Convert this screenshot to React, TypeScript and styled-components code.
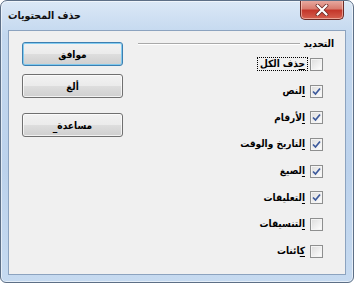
import React from 'react';
import styled, { createGlobalStyle } from 'styled-components';

const GlobalStyle = createGlobalStyle`
  html, body {
    margin: 0;
    padding: 0;
    background: #ffffff;
  }
  body {
    font-family: 'DejaVu Sans Condensed', 'DejaVu Sans', sans-serif;
  }
`;

const Frame = styled.div`
  box-sizing: border-box;
  width: 354px;
  height: 283px;
  display: flex;
  flex-direction: column;
  border: 1px solid #5d6f86;
  border-radius: 7px 7px 6px 6px;
  background: linear-gradient(180deg, #dbe8f6 0%, #c3d8ef 12%, #bcd2ec 60%, #c6daf0 100%);
  box-shadow: inset 0 0 0 1px rgba(255, 255, 255, 0.55);
  overflow: hidden;
`;

const TitleBar = styled.div`
  height: 29px;
  display: flex;
  align-items: flex-start;
  justify-content: space-between;
  padding: 0 9px 0 7px;
`;

const Title = styled.div`
  margin-top: 8px;
  font-size: 10.5px;
  font-weight: bold;
  color: #111;
  direction: rtl;
`;

const CloseButton = styled.div`
  width: 42px;
  height: 19px;
  margin-top: -1px;
  display: flex;
  align-items: center;
  justify-content: center;
  border: 1px solid #6b2a25;
  border-top: none;
  border-radius: 0 0 5px 5px;
  background: linear-gradient(180deg, #e9aea5 0%, #d97d70 45%, #c4372b 55%, #d5604f 100%);
  box-shadow: inset 0 0 0 1px rgba(255, 220, 210, 0.55);
`;

const Client = styled.div`
  flex: 1;
  margin: 0 7px 7px 7px;
  display: flex;
  border: 1px solid #8ca3bf;
  background: #f0f0f0;
`;

const ButtonColumn = styled.div`
  width: 101px;
  padding: 11px 0 0 13px;
  display: flex;
  flex-direction: column;
`;

const DialogButton = styled.div<{ $primary?: boolean; $gap: number }>`
  box-sizing: border-box;
  height: 24px;
  margin-bottom: ${(p) => p.$gap}px;
  display: flex;
  direction: ltr;
  align-items: center;
  justify-content: center;
  border: 1px solid ${(p) => (p.$primary ? '#3c7fb1' : '#707070')};
  border-radius: 3px;
  background: linear-gradient(180deg, #f2f2f2 0%, #ebebeb 48%, #dddddd 52%, #cfcfcf 100%);
  box-shadow: inset 0 0 0 1px ${(p) => (p.$primary ? 'rgba(120, 200, 240, 0.9)' : 'rgba(255, 255, 255, 0.7)')};
  font-size: 10px;
  font-weight: bold;
  color: #000;
`;

const ButtonText = styled.span`
  direction: rtl;
`;

const Mnemonic = styled.span`
  align-self: flex-end;
  margin-bottom: 4px;
  line-height: 1;
`;

const Group = styled.div`
  flex: 1;
  margin-left: 15px;
  padding-top: 7px;
  display: flex;
  flex-direction: column;
`;

const GroupHeader = styled.div`
  display: flex;
  align-items: center;
  gap: 4px;
  padding-right: 11px;
`;

const GroupLine = styled.div`
  flex: 1;
  height: 0;
  border-top: 1px solid #a9a9a9;
  border-bottom: 1px solid #ffffff;
`;

const GroupLabel = styled.div`
  font-size: 10px;
  font-weight: bold;
  color: #000;
  direction: rtl;
`;

const Options = styled.div`
  display: flex;
  flex-direction: column;
  padding-right: 22px;
  padding-top: 2px;
`;

const Row = styled.label`
  height: 26.7px;
  display: flex;
  align-items: center;
  direction: rtl;
  gap: 3px;
  font-size: 10px;
  font-weight: bold;
  color: #000;
`;

const Box = styled.span`
  box-sizing: border-box;
  width: 13px;
  height: 13px;
  display: flex;
  align-items: center;
  justify-content: center;
  border: 1px solid #8e8f8f;
  background: linear-gradient(135deg, #dcdcdc 0%, #f4f4f4 70%, #ffffff 100%);
  box-shadow: inset 0 0 0 1px #f4f4f4;
`;

const OptionText = styled.span<{ $focused?: boolean }>`
  padding: 0 2px 1px;
  outline: ${(p) => (p.$focused ? '1px dotted #000' : 'none')};
`;

const Key = styled.u`
  text-underline-offset: 2px;
`;

const Check = () => (
  <svg width="9" height="9" viewBox="0 0 9 9">
    <path d="M1 4.5 L3.5 7 L8 1.5" fill="none" stroke="#3d5a9c" strokeWidth="1.7" />
  </svg>
);

const CloseGlyph = () => (
  <svg width="14" height="12" viewBox="0 0 14 12">
    <path d="M2.5 1.5 L11.5 10.5 M11.5 1.5 L2.5 10.5" stroke="#6a2a25" strokeWidth="3.8" strokeLinecap="round" />
    <path d="M2.5 1.5 L11.5 10.5 M11.5 1.5 L2.5 10.5" stroke="#ffffff" strokeWidth="2.2" strokeLinecap="round" />
  </svg>
);

type Option = { key: string; rest: string; checked: boolean; focused?: boolean };

const options: Option[] = [
  { key: 'ح', rest: 'ذف الكل', checked: false, focused: true },
  { key: 'ا', rest: 'لنص', checked: true },
  { key: 'ا', rest: 'لأرقام', checked: true },
  { key: 'ا', rest: 'لتاريخ والوقت', checked: true },
  { key: 'ا', rest: 'لصيغ', checked: true },
  { key: 'ا', rest: 'لتعليقات', checked: true },
  { key: 'ا', rest: 'لتنسيقات', checked: false },
  { key: 'ك', rest: 'ائنات', checked: false },
];

export default function App() {
  return (
    <>
      <GlobalStyle />
      <Frame>
        <TitleBar>
          <Title>حذف المحتويات</Title>
          <CloseButton>
            <CloseGlyph />
          </CloseButton>
        </TitleBar>
        <Client>
          <ButtonColumn>
            <DialogButton $primary $gap={8}>
              <ButtonText>موافق</ButtonText>
            </DialogButton>
            <DialogButton $gap={15}>
              <ButtonText>ألغ</ButtonText>
            </DialogButton>
            <DialogButton $gap={0}>
              <Mnemonic>_</Mnemonic>
              <ButtonText>مساعدة</ButtonText>
            </DialogButton>
          </ButtonColumn>
          <Group>
            <GroupHeader>
              <GroupLine />
              <GroupLabel>التحديد</GroupLabel>
            </GroupHeader>
            <Options>
              {options.map((o, i) => (
                <Row key={i}>
                  <Box>{o.checked && <Check />}</Box>
                  <OptionText $focused={o.focused}>
                    <Key>{o.key}</Key>
                    {o.rest}
                  </OptionText>
                </Row>
              ))}
            </Options>
          </Group>
        </Client>
      </Frame>
    </>
  );
}
